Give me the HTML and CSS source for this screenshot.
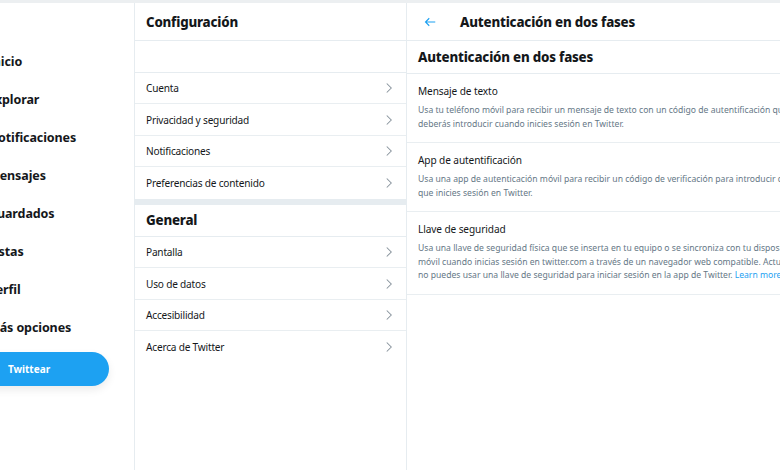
FILE: index.html
```html
<!DOCTYPE html>
<html lang="es">
<head>
<meta charset="utf-8">
<link rel="stylesheet" href="styles.css">
</head>
<body>
<div class="app">
  <nav class="nav">
    <ul class="nav-list">
      <li>Inicio</li>
      <li>Explorar</li>
      <li>Notificaciones</li>
      <li>Mensajes</li>
      <li>Guardados</li>
      <li>Listas</li>
      <li>Perfil</li>
      <li>Más opciones</li>
    </ul>
    <button class="tweet-btn">Twittear</button>
  </nav>

  <section class="settings">
    <header class="col-header"><h1>Configuración</h1></header>
    <div class="blank-row"></div>
    <ul class="rows">
      <li><span>Cuenta</span><svg class="chev" viewBox="0 0 10 16"><path d="M2 2l6 6-6 6"/></svg></li>
      <li><span>Privacidad y seguridad</span><svg class="chev" viewBox="0 0 10 16"><path d="M2 2l6 6-6 6"/></svg></li>
      <li><span>Notificaciones</span><svg class="chev" viewBox="0 0 10 16"><path d="M2 2l6 6-6 6"/></svg></li>
      <li class="last"><span>Preferencias de contenido</span><svg class="chev" viewBox="0 0 10 16"><path d="M2 2l6 6-6 6"/></svg></li>
    </ul>
    <div class="band"></div>
    <h2 class="group-title">General</h2>
    <ul class="rows">
      <li><span>Pantalla</span><svg class="chev" viewBox="0 0 10 16"><path d="M2 2l6 6-6 6"/></svg></li>
      <li><span>Uso de datos</span><svg class="chev" viewBox="0 0 10 16"><path d="M2 2l6 6-6 6"/></svg></li>
      <li><span>Accesibilidad</span><svg class="chev" viewBox="0 0 10 16"><path d="M2 2l6 6-6 6"/></svg></li>
      <li class="last"><span>Acerca de Twitter</span><svg class="chev" viewBox="0 0 10 16"><path d="M2 2l6 6-6 6"/></svg></li>
    </ul>
  </section>

  <section class="detail">
    <header class="col-header detail-header">
      <svg class="back" viewBox="0 0 16 12"><path d="M15 6H2M7 1L2 6l5 5"/></svg>
      <h1>Autenticación en dos fases</h1>
    </header>
    <h2 class="detail-title">Autenticación en dos fases</h2>
    <div class="option">
      <h3>Mensaje de texto</h3>
      <p>Usa tu teléfono móvil para recibir un mensaje de texto con un código de autentificación que deberás introducir cuando inicies sesión en Twitter.</p>
    </div>
    <div class="option">
      <h3>App de autentificación</h3>
      <p>Usa una app de autenticación móvil para recibir un código de verificación para introducir cada vez que inicies sesión en Twitter.</p>
    </div>
    <div class="option">
      <h3>Llave de seguridad</h3>
      <p>Usa una llave de seguridad física que se inserta en tu equipo o se sincroniza con tu dispositivo móvil cuando inicias sesión en twitter.com a través de un navegador web compatible. Actualmente no puedes usar una llave de seguridad para iniciar sesión en la app de Twitter. <a href="#">Learn more</a></p>
    </div>
  </section>
</div>
</body>
</html>
```

FILE: styles.css
```css
* { box-sizing: border-box; }
html, body { margin: 0; padding: 0; }
body {
  font-family: "Noto Sans", "Open Sans", sans-serif;
  color: #14171a;
  background: #fff;
  width: 780px;
  height: 470px;
  overflow: hidden;
}
.app {
  display: flex;
  height: 470px;
  border-top: 3px solid #eceff1;
  overflow: hidden;
}
ul { list-style: none; margin: 0; padding: 0; }
h1, h2, h3, p { margin: 0; }

/* left nav */
.nav {
  width: 135px;
  flex: none;
  border-right: 1px solid #e6ecf0;
  padding-top: 40px;
  overflow: hidden;
}
.nav-list li {
  height: 38px;
  line-height: 38px;
  font-weight: 700;
  font-size: 12.5px;
  letter-spacing: -0.1px;
  margin-left: -12px;
  white-space: nowrap;
}
.tweet-btn {
  display: block;
  margin: 5px 0 0 -52px;
  width: 161px;
  height: 34px;
  border: none;
  border-radius: 17px;
  background: #1da1f2;
  color: #fff;
  font-family: inherit;
  font-weight: 700;
  font-size: 10px;
  padding-left: 7px;
  box-shadow: 0 4px 8px rgba(0, 0, 0, 0.08);
}

/* middle */
.settings {
  width: 272px;
  flex: none;
  border-right: 1px solid #e6ecf0;
}
.col-header {
  height: 38px;
  display: flex;
  align-items: center;
  padding-left: 11px;
  border-bottom: 1px solid #e6ecf0;
}
.col-header h1 {
  font-size: 13.3px;
  font-weight: 800;
  letter-spacing: -0.2px;
}
.blank-row {
  height: 32px;
  border-bottom: 1px solid #e6ecf0;
}
.rows li {
  height: 31.4px;
  display: flex;
  align-items: center;
  justify-content: space-between;
  padding: 0 13px 0 11px;
  font-size: 10.1px;
  letter-spacing: -0.2px;
  color: #14171a;
  border-bottom: 1px solid #e9eef1;
}
.rows li.last { border-bottom: none; }
.chev {
  width: 8px;
  height: 12px;
  fill: none;
  stroke: #8a959e;
  stroke-width: 1.4;
}
.band {
  height: 6px;
  background: #e6ecf0;
}
.group-title {
  height: 32.5px;
  display: flex;
  align-items: center;
  padding-left: 11px;
  font-size: 13.3px;
  font-weight: 800;
  letter-spacing: -0.2px;
  border-bottom: 1px solid #e6ecf0;
}

/* right */
.detail {
  flex: 1;
  min-width: 0;
}
.detail-header { padding-left: 17px; }
.back {
  width: 12px;
  height: 10px;
  fill: none;
  stroke: #1da1f2;
  stroke-width: 1.5;
  margin-right: 24px;
}
.detail-title {
  height: 33px;
  display: flex;
  align-items: center;
  padding-left: 11px;
  font-size: 13.3px;
  font-weight: 800;
  letter-spacing: -0.2px;
  border-bottom: 1px solid #e6ecf0;
}
.option {
  padding: 8px 0 11px 11px;
  border-bottom: 1px solid #e9eef1;
  white-space: nowrap;
  overflow: hidden;
}
.option h3 {
  font-size: 10.1px;
  font-weight: 400;
  letter-spacing: -0.1px;
  line-height: 18px;
  margin-bottom: 4px;
}
.option p {
  font-size: 8.6px;
  line-height: 13.5px;
  color: #657786;
  white-space: normal;
  width: 399px;
}
.option a { color: #1da1f2; text-decoration: none; }
```
